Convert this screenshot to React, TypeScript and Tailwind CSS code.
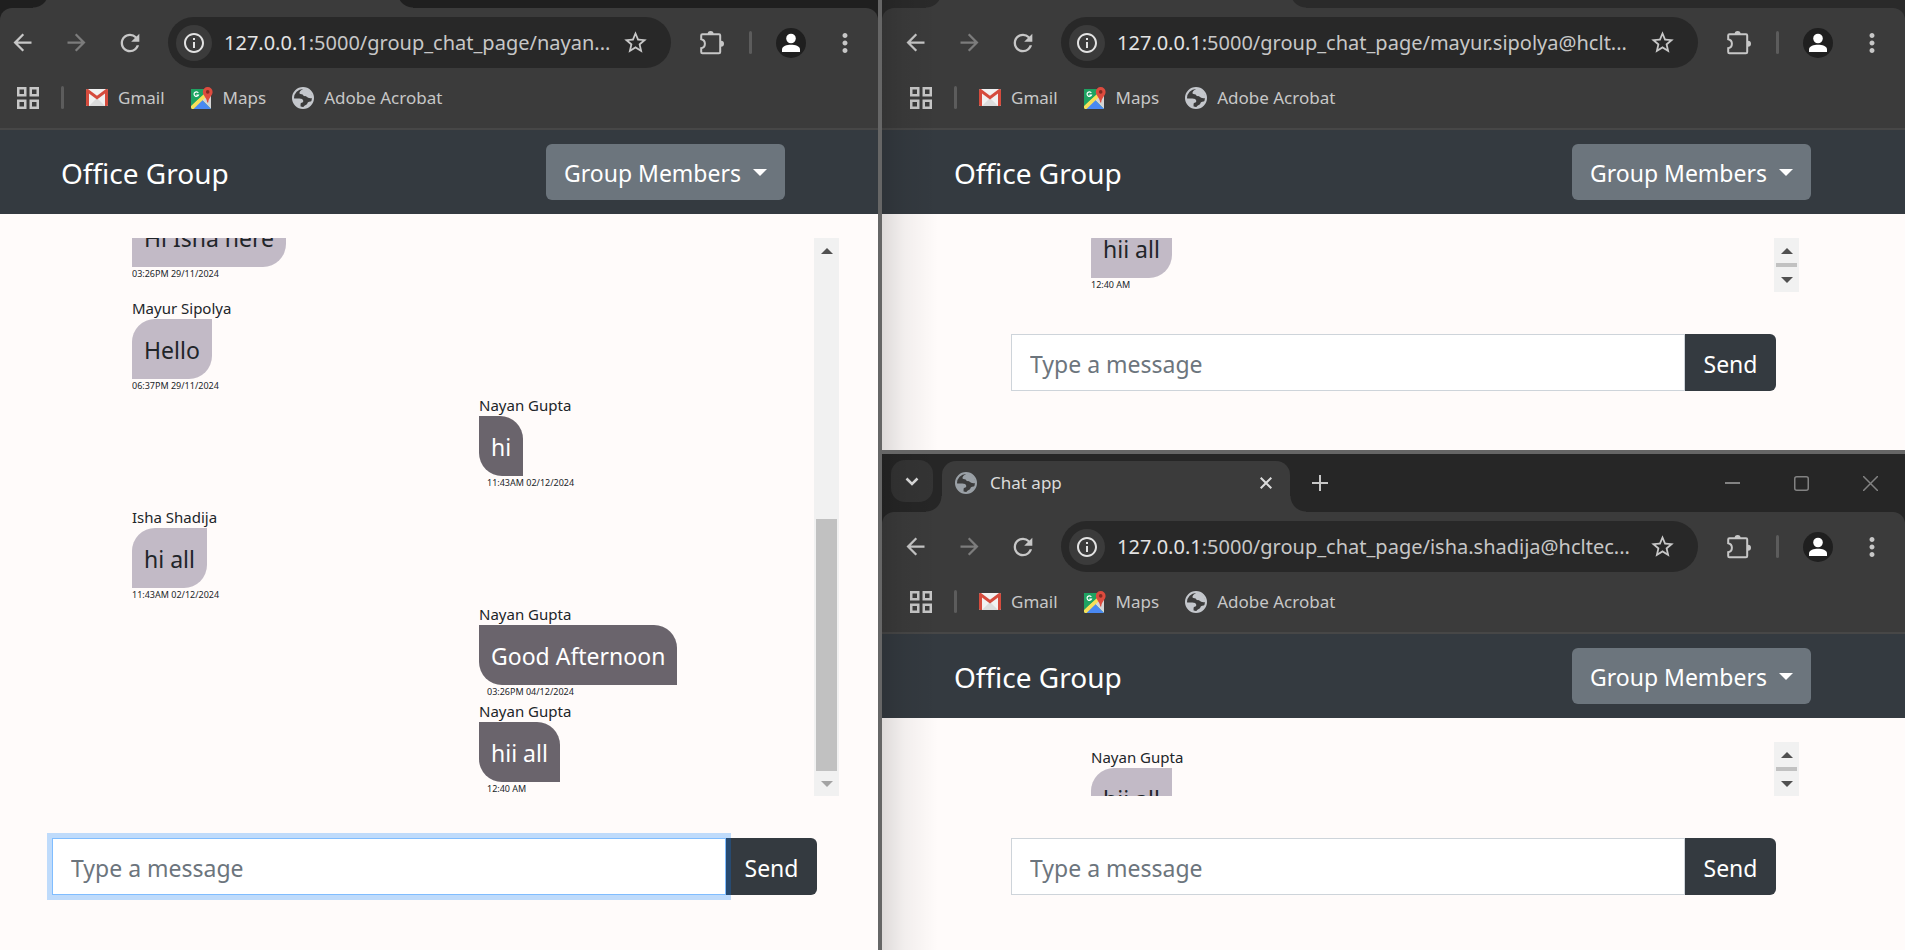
import type { ReactNode } from "react";
import {
  MdArrowBack,
  MdArrowForward,
  MdInfoOutline,
  MdMoreVert,
  MdRefresh,
  MdStarBorder,
} from "react-icons/md";

type Message = { from?: string; text: string; time: string; mine?: boolean };

const nayanMessages: Message[] = [
  { text: "Hi Isha here", time: "03:26PM 29/11/2024" },
  { from: "Mayur Sipolya", text: "Hello", time: "06:37PM 29/11/2024" },
  { from: "Nayan Gupta", text: "hi", time: "11:43AM 02/12/2024", mine: true },
  { from: "Isha Shadija", text: "hi all", time: "11:43AM 02/12/2024" },
  { from: "Nayan Gupta", text: "Good Afternoon", time: "03:26PM 04/12/2024", mine: true },
  { from: "Nayan Gupta", text: "hii all", time: "12:40 AM", mine: true },
];

const mayurMessages: Message[] = [{ text: "hii all", time: "12:40 AM" }];

const ishaMessages: Message[] = [{ from: "Nayan Gupta", text: "hii all", time: "" }];

function Globe({ className }: { className: string }) {
  return (
    <svg viewBox="0 0 22 22" className={className} aria-hidden="true">
      <circle cx="11" cy="11" r="10" fill="none" stroke="currentColor" strokeWidth="2" />
      <path
        d="M11.5 1.5C10 3 8 3.600 7.500 5.500c-.3 1.300.8 1.800 2.200 1.700 1.500 0 1.300 1.600 2.500 1.900 1.300.3 2.300.2 3.200 1.200.8.9 2.300.9 5 .9C20.500 6 16.500 1.500 11.500 1.500z"
        fill="currentColor"
      />
      <path
        d="M1.500 11.500h5.800c2 0 4 .8 4 2.600 0 1.500-1.600 1.500-2.300 2-.6.5-.3 1.800-.5 4C4.500 19.500 1.500 16 1.500 11.500z"
        fill="currentColor"
      />
      <path d="M11.500 20.500c.2-1.600 1.500-2 2.700-2.700 1.300-.8 1-2.300 2.300-2.900 1-.5 2.300-.3 3.500-.4-1.200 3.500-4.500 6-8.500 6z" fill="currentColor" />
    </svg>
  );
}

function Gmail() {
  return (
    <svg viewBox="0 0 22 17" className="h-[17px] w-[22px]" aria-hidden="true">
      <rect width="22" height="17" rx="1.500" fill="#f1f1f1" />
      <path d="M3 17 11 9l8 8z" fill="#dcdcdc" />
      <path d="M0 1.500C0 .7.600 0 1.500 0H2l9 6.800L20 0h.5c.9 0 1.500.7 1.500 1.500V15.500c0 .9-.6 1.500-1.500 1.500H19V4.600l-8 6-8-6V17H1.500C.6 17 0 16.400 0 15.500z" fill="#d54b3d" />
    </svg>
  );
}

function Maps() {
  return (
    <svg viewBox="0 0 22 22" className="size-[22px]" aria-hidden="true">
      <rect x="0" y="2" width="20" height="20" rx="1.500" fill="#1ea362" />
      <path d="M10 12 20 22V4z" fill="#d5d5d5" />
      <path d="M1 22 10.500 12.500 20 22z" fill="#4a89f3" />
      <path d="M0 19 14 5l3 3L2.500 22H1.500C.7 22 0 21.300 0 20.500z" fill="#f7e05a" />
      <path d="M0 2h15L13 7 0 18.500z" fill="#1ea362" />
      <path d="M7.300 5.800A2.300 2.300 0 1 0 7.500 8H5.300" fill="none" stroke="#fff" strokeWidth="1.200" />
      <path d="M16.700 0a4.900 4.900 0 0 1 4.900 4.900c0 3.500-4 5.600-4.400 10.600h-1C15.800 10.500 11.800 8.400 11.800 4.900A4.900 4.900 0 0 1 16.700 0z" fill="#dd4b3e" />
      <circle cx="16.700" cy="4.900" r="1.800" fill="#822b23" />
    </svg>
  );
}

function Puzzle() {
  return (
    <svg viewBox="0 0 24 24" className="size-6" aria-hidden="true">
      <path
        d="M2 9V5.200C2 4.500 2.500 4 3.200 4h16.600c.7 0 1.200.5 1.200 1.200v16.600c0 .7-.5 1.200-1.200 1.200H3.200C2.500 23 2 22.500 2 21.800V18c2.200-.4 3.700-2.200 3.700-4.500S4.200 9.400 2 9z"
        transform="translate(-.8 -.8)"
        fill="none"
        stroke="currentColor"
        strokeWidth="2"
      />
      <path d="M7.600 3a3 3 0 0 1 6 0zM21 9.800a3 3 0 0 1 0 6z" fill="currentColor" />
    </svg>
  );
}

function AppsGrid() {
  return (
    <svg viewBox="0 0 22 22" className="size-[22px]" fill="none" stroke="currentColor" strokeWidth="2.500" aria-hidden="true">
      <path d="M1.250 1.250h7v7h-7zM13.750 1.250h7v7h-7zM1.250 13.750h7v7h-7zM13.750 13.750h7v7h-7z" />
    </svg>
  );
}

function Profile() {
  return (
    <svg viewBox="0 0 30 30" className="size-[30px]" aria-hidden="true">
      <circle cx="15" cy="15" r="15" fill="#1f1f1f" />
      <circle cx="15" cy="10.500" r="4.800" fill="#fff" />
      <path d="M6 24v-2.500c0-3.400 5-4.800 9-4.800s9 1.400 9 4.800V24z" fill="#fff" />
    </svg>
  );
}

function IconButton({ label, children, className }: { label: string; children: ReactNode; className: string }) {
  return (
    <button type="button" aria-label={label} className={`flex shrink-0 items-center justify-center ${className}`}>
      {children}
    </button>
  );
}

function Tab({ title }: { title?: string }) {
  return (
    <div className="flex h-full min-w-0 items-end">
      <div className="size-4 shrink-0 bg-[radial-gradient(circle_at_top_left,transparent_15px,#3b3b3b_16px)]" />
      <div className="flex h-[51px] w-[348px] min-w-0 items-center rounded-t-[14px] bg-[#3b3b3b] pr-4 pl-[13px] pb-2">
        {title && (
          <>
            <Globe className="size-[22px] shrink-0 text-[#9aa0a6]" />
            <span className="grow pl-[13px] text-[17px] text-[#dcdcdc]">{title}</span>
            <IconButton label="Close tab" className="size-4 text-[#dcdcdc]">
              <svg viewBox="0 0 12 12" className="size-3" stroke="currentColor" strokeWidth="2" aria-hidden="true">
                <path d="m.7.700 10.600 10.600M11.300.7.700 11.300" />
              </svg>
            </IconButton>
          </>
        )}
      </div>
      <div className="size-4 shrink-0 bg-[radial-gradient(circle_at_top_right,transparent_15px,#3b3b3b_16px)]" />
    </div>
  );
}

function TabStrip() {
  return (
    <div className="flex h-[58px] shrink-0 items-center bg-[#262626] pl-[9px] text-[#c7c7c7]">
      <IconButton label="Search tabs" className="-mt-1 mr-[-7px] size-[42px] rounded-[14px] bg-[#343434]">
        <svg viewBox="0 0 14 9" className="h-[9px] w-[14px]" fill="none" stroke="#dcdcdc" strokeWidth="2.500" aria-hidden="true">
          <path d="m1.500 1.500 5.500 5.500 5.500-5.500" />
        </svg>
      </IconButton>
      <Tab title="Chat app" />
      <IconButton label="New tab" className="size-7">
        <svg viewBox="0 0 16 16" className="size-4" stroke="currentColor" strokeWidth="2" aria-hidden="true">
          <path d="M8 0v16M0 8h16" />
        </svg>
      </IconButton>
      <div className="ml-auto flex text-[#828282]">
        <IconButton label="Minimize" className="h-[58px] w-[69px]">
          <svg viewBox="0 0 15 15" className="size-[15px]" stroke="currentColor" strokeWidth="2" aria-hidden="true">
            <path d="M0 7h15" />
          </svg>
        </IconButton>
        <IconButton label="Maximize" className="h-[58px] w-[69px]">
          <svg viewBox="0 0 15 15" className="size-[15px]" fill="none" stroke="currentColor" strokeWidth="1.500" aria-hidden="true">
            <rect x=".75" y=".75" width="13.500" height="13.500" rx="2" />
          </svg>
        </IconButton>
        <IconButton label="Close" className="h-[58px] w-[69px]">
          <svg viewBox="0 0 15 15" className="size-[15px]" stroke="currentColor" strokeWidth="1.500" aria-hidden="true">
            <path d="m0 0 15 15M15 0 0 15" />
          </svg>
        </IconButton>
      </div>
    </div>
  );
}

function Bookmark({ icon, label }: { icon: ReactNode; label: string }) {
  return (
    <a href="#" className="flex items-center gap-[10px] text-[17px] text-[#c7c7c7]">
      {icon}
      {label}
    </a>
  );
}

function Toolbar({ path, cut, stripClass }: { path: string; cut: boolean; stripClass: string }) {
  return (
    <div className={stripClass}>
      <div className="h-[122px] rounded-t-[12px] border-b-2 border-[#474747] bg-[#3b3b3b] text-[#c7c7c7]">
        <div className={`flex h-[69px] items-center ${cut ? "-ml-[5px]" : "pl-[6px]"}`}>
          <IconButton label="Back" className="w-[54px]">
            <MdArrowBack size={27} />
          </IconButton>
          <IconButton label="Forward" className="w-[54px] text-[#7c7c7c]">
            <MdArrowForward size={27} />
          </IconButton>
          <IconButton label="Reload" className="mr-[11px] w-[54px]">
            <MdRefresh size={28} />
          </IconButton>
          <div className="flex h-[51px] min-w-0 grow items-center rounded-full bg-[#282828] pr-5 pl-2">
            <IconButton label="Site information" className="size-9 rounded-full bg-[#3b3b3b] text-[#e3e3e3]">
              <MdInfoOutline size={24} />
            </IconButton>
            <span className="min-w-0 grow pl-3 text-[20px] whitespace-nowrap">
              <span className="text-[#e3e3e3]">127.0.0.1</span>
              {path}
            </span>
            <IconButton label="Bookmark this page" className="w-8">
              <MdStarBorder size={27} />
            </IconButton>
          </div>
          <IconButton label="Extensions" className="ml-[17px] w-12">
            <Puzzle />
          </IconButton>
          <div className="ml-[13px] h-[23px] w-[3px] shrink-0 rounded-full bg-[#5c5c5c]" />
          <IconButton label="Profile" className="ml-3 w-[54px]">
            <Profile />
          </IconButton>
          <IconButton label="Menu" className="mr-[6px] w-[54px]">
            <MdMoreVert size={30} />
          </IconButton>
        </div>
        <div className={`flex h-[41px] items-center ${cut ? "pl-[17px]" : "pl-[28px]"}`}>
          <IconButton label="Apps" className="">
            <AppsGrid />
          </IconButton>
          <div className="mx-[22px] h-[23px] w-[3px] shrink-0 rounded-full bg-[#5c5c5c]" />
          <div className="flex gap-[26px]">
            <Bookmark icon={<Gmail />} label="Gmail" />
            <Bookmark icon={<Maps />} label="Maps" />
            <Bookmark icon={<Globe className="size-[22px] text-[#c4c7cc]" />} label="Adobe Acrobat" />
          </div>
        </div>
      </div>
    </div>
  );
}

function GroupHeader({ cut }: { cut: boolean }) {
  return (
    <header className={`flex h-[84px] shrink-0 items-center justify-between bg-[#343a40] text-white ${cut ? "pr-[93px] pl-[61px]" : "pr-[94px] pl-[72px]"}`}>
      <h1 className="pt-px text-[28px]">Office Group</h1>
      <button type="button" className="flex h-14 items-center rounded-md bg-[#6c757d] px-[18px] pt-[2px] text-[23px]">
        Group Members
        <svg viewBox="0 0 14 7" className="mb-[2px] ml-3 h-[7px] w-[14px]" aria-hidden="true">
          <path d="M0 0h14L7 7z" fill="#fff" />
        </svg>
      </button>
    </header>
  );
}

function MessageItem({ message }: { message: Message }) {
  const { from, text, time, mine } = message;
  return (
    <li className={`flex shrink-0 flex-col items-start pb-px ${mine ? "mt-px ml-[347px]" : "mt-4"}`}>
      {from && <span className="text-[15px] leading-[22px]">{from}</span>}
      <p
        className={`flex h-[60px] items-center px-3 pt-[3px] text-[23px] ${
          mine
            ? "rounded-tr-[23px] rounded-bl-[23px] bg-[#6a646c] text-white"
            : "rounded-tl-[23px] rounded-br-[23px] bg-[#c2bac6]"
        }`}
      >
        {text}
      </p>
      {time && <time className={`text-[9px] leading-[13px] ${mine ? "pl-2" : ""}`}>{time}</time>}
    </li>
  );
}

function Scrollbar({ thumb, atEnd }: { thumb: string; atEnd: boolean }) {
  return (
    <div className="flex w-[25px] shrink-0 flex-col items-center bg-[#f1f1f1]">
      <IconButton label="Scroll up" className="h-[25px] w-full">
        <svg viewBox="0 0 12 6" className="h-[6px] w-3" aria-hidden="true">
          <path d="M0 6h12L6 0z" fill="#505050" />
        </svg>
      </IconButton>
      <div className="flex min-h-0 w-full grow flex-col justify-end">
        <div className={`mx-[2px] bg-[#c1c1c1] ${thumb}`} />
      </div>
      <IconButton label="Scroll down" className="h-[25px] w-full">
        <svg viewBox="0 0 12 6" className="h-[6px] w-3" aria-hidden="true">
          <path d="M0 0h12L6 6z" fill={atEnd ? "#a3a3a3" : "#505050"} />
        </svg>
      </IconButton>
    </div>
  );
}

function Composer({ id, focused, className }: { id: string; focused?: boolean; className: string }) {
  return (
    <form className={`flex h-[57px] shrink-0 ${className}`} onSubmit={(e) => e.preventDefault()}>
      <input
        id={id}
        type="text"
        aria-label="Message"
        placeholder="Type a message"
        className={`h-full min-w-0 grow border bg-white px-[18px] pt-[3px] text-[23px] outline-none placeholder:text-[#6c757d] ${
          focused ? "relative z-10 border-[#80bdff] shadow-[0_0_0_5px_rgba(0,123,255,0.25)]" : "border-[#ced4da]"
        }`}
      />
      <button type="submit" className="w-[91px] shrink-0 rounded-r-md bg-[#343a40] pt-[3px] text-[23px] text-white">
        Send
      </button>
    </form>
  );
}

function EdgeShadow() {
  return (
    <div className="pointer-events-none absolute inset-y-0 left-0 w-14 bg-[linear-gradient(to_right,rgba(0,0,0,0.13),rgba(0,0,0,0.05)_40%,transparent)]" />
  );
}

export default function App() {
  return (
    <div className="h-screen overflow-hidden bg-white pr-[14px] pb-[2px] font-['Noto_Sans',sans-serif] text-[#212529]">
      <main className="grid h-full grid-cols-[46.3%_minmax(0,1fr)] grid-rows-[minmax(0,45fr)_minmax(0,50fr)]">
        <section className="row-span-2 flex min-h-0 flex-col border-r-4 border-[#666] bg-[#fffbfa]">
          <div className="flex h-2 shrink-0 items-end overflow-hidden bg-[#1f1f1f] pl-[33px]">
            <Tab />
          </div>
          <Toolbar path=":5000/group_chat_page/nayan..." cut stripClass="bg-[#1f1f1f]" />
          <GroupHeader cut />
          <div className="mt-6 flex min-h-0 grow pr-[39px] pl-[132px]">
            <ul className="flex grow flex-col justify-end overflow-hidden">
              {nayanMessages.map((m, i) => (
                <MessageItem key={i} message={m} />
              ))}
            </ul>
            <Scrollbar thumb="h-[calc(50%-2px)]" atEnd />
          </div>
          <Composer id="message-nayan" focused className="mt-[42px] mb-[55px] pr-[61px] pl-[52px]" />
        </section>

        <section className="relative flex min-h-0 flex-col bg-[#fffbfa]">
          <div className="flex h-2 shrink-0 items-end overflow-hidden bg-[#2a2a2a] pl-[44px]">
            <Tab />
          </div>
          <Toolbar path=":5000/group_chat_page/mayur.sipolya@hclt..." cut={false} stripClass="bg-[#2a2a2a]" />
          <GroupHeader cut={false} />
          <div className="mt-6 flex min-h-0 grow pr-[106px] pl-[209px]">
            <ul className="flex grow flex-col justify-end overflow-hidden">
              {mayurMessages.map((m, i) => (
                <MessageItem key={i} message={m} />
              ))}
            </ul>
            <Scrollbar thumb="h-1" atEnd={false} />
          </div>
          <Composer id="message-mayur" className="mt-[42px] mb-[59px] px-[129px]" />
          <EdgeShadow />
        </section>

        <section className="relative flex min-h-0 flex-col border-t-4 border-[#666] bg-[#fffbfa]">
          <TabStrip />
          <Toolbar path=":5000/group_chat_page/isha.shadija@hcltec..." cut={false} stripClass="bg-[#262626]" />
          <GroupHeader cut={false} />
          <div className="mt-6 flex min-h-0 grow pr-[106px] pl-[209px]">
            <ul className="-mt-3 flex grow flex-col overflow-hidden">
              {ishaMessages.map((m, i) => (
                <MessageItem key={i} message={m} />
              ))}
            </ul>
            <Scrollbar thumb="h-1" atEnd={false} />
          </div>
          <Composer id="message-isha" className="mt-[42px] mb-[55px] px-[129px]" />
          <EdgeShadow />
        </section>
      </main>
    </div>
  );
}
